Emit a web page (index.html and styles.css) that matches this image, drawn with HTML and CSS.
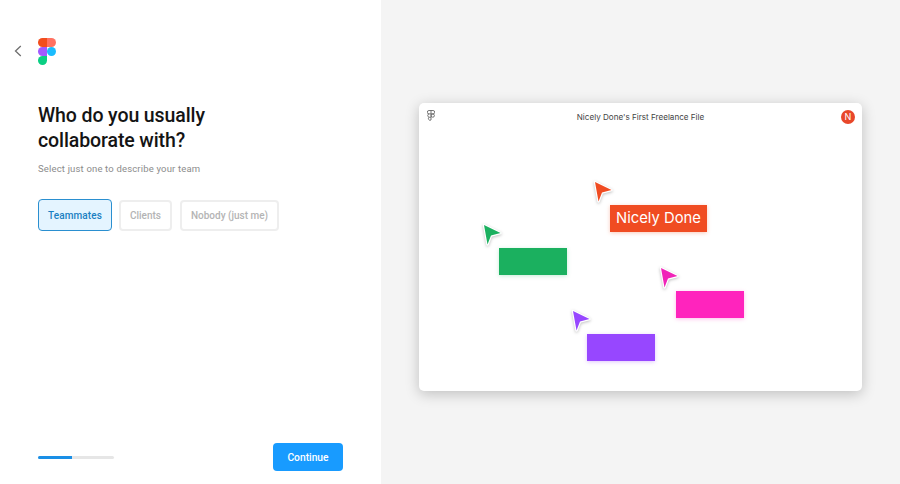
FILE: index.html
```html
<!DOCTYPE html>
<html lang="en">
<head>
    <meta charset="UTF-8">
    <meta name="viewport" content="width=device-width, initial-scale=1.0">
    <title>Who do you usually collaborate with?</title>
    <link rel="stylesheet" href="styles.css">
</head>
<body>
    <svg width="0" height="0" class="defs">
        <defs>
            <path id="cursor" d="M2 2 L18.5 10 L9 12.5 L5.5 21.5 Z"/>
        </defs>
    </svg>

    <div class="left-panel">
        <div class="top-bar">
            <button type="button" class="back-btn" aria-label="Back">
                <svg width="8" height="12" viewBox="0 0 8 12"><path d="M6.8 1 L1.5 6 L6.8 11" fill="none" stroke="#6f6f6f" stroke-width="1.3"/></svg>
            </button>
            <svg class="logo" width="18" height="27" viewBox="0 0 18 27">
                <path d="M9 0 H4.5 a4.5 4.5 0 0 0 0 9 H9 Z" fill="#f24e1e"/>
                <path d="M9 0 H13.5 a4.5 4.5 0 0 1 0 9 H9 Z" fill="#ff7262"/>
                <path d="M9 9 H4.5 a4.5 4.5 0 0 0 0 9 H9 Z" fill="#a259ff"/>
                <circle cx="13.5" cy="13.5" r="4.5" fill="#1abcfe"/>
                <path d="M9 18 H4.5 a4.5 4.5 0 1 0 4.5 4.5 Z" fill="#0acf83"/>
            </svg>
        </div>

        <h1 class="title">Who do you usually<br>collaborate with?</h1>
        <p class="subtitle">Select just one to describe your team</p>

        <div class="options">
            <button type="button" class="option selected">Teammates</button>
            <button type="button" class="option">Clients</button>
            <button type="button" class="option">Nobody (just me)</button>
        </div>

        <div class="footer">
            <div class="progress"><div class="progress-fill"></div></div>
            <button type="button" class="continue-btn">Continue</button>
        </div>
    </div>

    <div class="right-panel">
        <div class="file-window">
            <div class="window-head">
                <svg class="mini-logo" width="8" height="11" viewBox="0 0 8 11" fill="none" stroke="#666" stroke-width="0.9">
                    <path d="M4 .5 H2 a1.7 1.7 0 0 0 0 3.4 H6 a1.7 1.7 0 0 0 0 -3.4 H4 Z"/>
                    <path d="M4 .5 V10 a1.6 1.6 0 1 1 -1.8 -2.8 H4"/>
                    <path d="M2 3.9 a1.7 1.7 0 0 0 0 3.3"/>
                    <circle cx="5.8" cy="5.6" r="1.6"/>
                </svg>
                <span class="file-name">Nicely Done's First Freelance File</span>
                <span class="avatar">N</span>
            </div>

            <div class="canvas">
                <svg class="cursor cursor-red" width="22" height="24" viewBox="0 0 22 24"><use href="#cursor"/></svg>
                <div class="block block-red">Nicely Done</div>

                <svg class="cursor cursor-green" width="22" height="24" viewBox="0 0 22 24"><use href="#cursor"/></svg>
                <div class="block block-green"></div>

                <svg class="cursor cursor-pink" width="22" height="24" viewBox="0 0 22 24"><use href="#cursor"/></svg>
                <div class="block block-pink"></div>

                <svg class="cursor cursor-purple" width="22" height="24" viewBox="0 0 22 24"><use href="#cursor"/></svg>
                <div class="block block-purple"></div>
            </div>
        </div>
    </div>
</body>
</html>
```

FILE: styles.css
```css
* {
    margin: 0;
    padding: 0;
    box-sizing: border-box;
}
body {
    width: 900px;
    height: 484px;
    overflow: hidden;
    display: flex;
    font-family: 'Inter', 'Liberation Sans', sans-serif;
    background: #fff;
}
button {
    font-family: inherit;
    background: none;
    border: none;
}
.defs {
    position: absolute;
}
.left-panel {
    width: 381px;
    height: 484px;
    padding: 38px 38px 13px 38px;
    display: flex;
    flex-direction: column;
    background: #fff;
}
.top-bar {
    position: relative;
    height: 27px;
}
.back-btn {
    position: absolute;
    left: -24px;
    top: 7px;
    width: 8px;
    height: 12px;
    display: flex;
}
.logo {
    display: block;
}
.title {
    margin-top: 38px;
    font-family: 'Roboto', sans-serif;
    font-size: 19.5px;
    line-height: 25px;
    font-weight: 500;
    letter-spacing: -0.1px;
    color: #141414;
}
.subtitle {
    margin-top: 9px;
    font-family: 'Roboto', sans-serif;
    font-size: 9.5px;
    line-height: 14px;
    letter-spacing: 0.17px;
    color: #8c8c8c;
}
.options {
    margin-top: 23px;
    display: flex;
    align-items: center;
    gap: 7px;
}
.option {
    height: 31px;
    padding: 0 9px;
    border: 2px solid #eeeeee;
    border-radius: 4px;
    font-family: 'Roboto', sans-serif;
    font-size: 10px;
    font-weight: 500;
    color: #b4b4b4;
}
.option:last-child {
    margin-left: 1px;
}
.option.selected {
    height: 32px;
    padding: 0 9px;
    border: 1.5px solid #2a8fd0;
    background: #e4f4ff;
    letter-spacing: 0.1px;
    color: #1b7fc2;
}
.footer {
    margin-top: auto;
    display: flex;
    align-items: center;
    justify-content: space-between;
}
.progress {
    width: 76px;
    height: 3px;
    border-radius: 2px;
    background: #e6e6e6;
    overflow: hidden;
}
.progress-fill {
    width: 34px;
    height: 100%;
    background: #1a8fe6;
}
.continue-btn {
    width: 70px;
    height: 28px;
    border-radius: 4px;
    background: #189bff;
    color: #fff;
    font-family: 'Roboto', sans-serif;
    font-size: 10.25px;
    font-weight: 500;
}
.right-panel {
    flex: 1;
    padding-top: 103px;
    display: flex;
    justify-content: center;
    align-items: flex-start;
    background: #f4f4f4;
}
.file-window {
    width: 443px;
    height: 288px;
    display: flex;
    flex-direction: column;
    background: #fff;
    border-radius: 5px;
    box-shadow: 0 3px 14px rgba(0, 0, 0, 0.22);
}
.window-head {
    position: relative;
    height: 28px;
    padding: 7px 7px 0 8px;
    display: flex;
    justify-content: space-between;
    align-items: flex-start;
}
.mini-logo {
    display: block;
}
.file-name {
    position: absolute;
    left: 0;
    right: 0;
    top: 8px;
    text-align: center;
    font-size: 8.1px;
    line-height: 13px;
    color: #444;
}
.avatar {
    width: 14px;
    height: 14px;
    border-radius: 50%;
    background: #e8472a;
    color: #fff;
    font-size: 9px;
    line-height: 14px;
    text-align: center;
}
.canvas {
    position: relative;
    flex: 1;
}
/* canvas coords: window origin is 419,131 */
.block {
    position: absolute;
    width: 67.5px;
    height: 27px;
}
.block-red {
    left: 191px;
    top: 74px;
    width: 97px;
    background: #f04c22;
    box-shadow: 0 1px 4px rgba(242, 78, 30, 0.3);
    color: #fff;
    font-size: 14.8px;
    line-height: 26px;
    text-align: center;
}
.block-green {
    left: 80px;
    top: 117px;
    background: #1bb05f;
    box-shadow: 0 1px 4px rgba(27, 176, 95, 0.25);
}
.block-pink {
    left: 257px;
    top: 160px;
    background: #ff24bd;
    box-shadow: 0 1px 4px rgba(255, 36, 189, 0.3);
}
.block-purple {
    left: 168px;
    top: 203px;
    background: #9747ff;
    box-shadow: 0 1px 4px rgba(151, 71, 255, 0.3);
}
.cursor {
    position: absolute;
    stroke: #fff;
    stroke-width: 2.4px;
    stroke-linejoin: round;
    paint-order: stroke;
    filter: drop-shadow(0 1px 1.5px rgba(0, 0, 0, 0.25));
}
.cursor-red {
    left: 174px;
    top: 49px;
    fill: #f04c22;
}
.cursor-green {
    left: 63px;
    top: 92px;
    fill: #1bb05f;
}
.cursor-pink {
    left: 240px;
    top: 135px;
    fill: #f024b8;
}
.cursor-purple {
    left: 152px;
    top: 178px;
    fill: #9747ff;
}
```
